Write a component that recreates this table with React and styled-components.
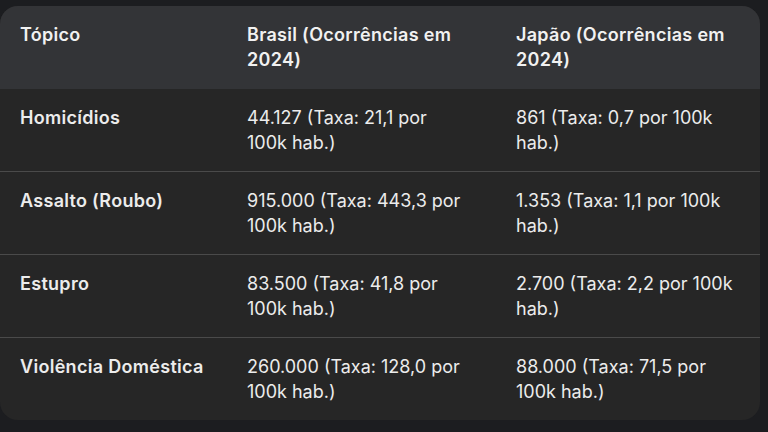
import React from "react";
import styled, { createGlobalStyle } from "styled-components";

const Global = createGlobalStyle`
  html, body { margin: 0; padding: 0; background: #1c1d20; }
  body { width: 768px; height: 432px; overflow: hidden; }
`;

const Page = styled.div`
  padding: 6px 8px 12px 0;
  font-family: Inter, "Noto Sans", sans-serif;
  color: #ececec;
`;

const Card = styled.div`
  width: 760px;
  border-radius: 18px;
  overflow: hidden;
  background: #262626;
`;

const Table = styled.table`
  width: 100%;
  border-collapse: collapse;
  table-layout: fixed;
`;

const Col = styled.col`
  width: ${(p) => p.$w}px;
`;

const HeadRow = styled.tr`
  background: #333437;
`;

const BodyRow = styled.tr`
  border-top: ${(p) => (p.$first ? "none" : "1px solid #4a4a4a")};
`;

const Th = styled.th`
  text-align: left;
  vertical-align: top;
  padding: 16px ${(p) => p.$pr || 20}px 17px 20px;
  font-size: 18px;
  line-height: 25px;
  font-weight: 600;
  letter-spacing: 0.3px;
  color: #f1f1f1;
  height: 50px;
`;

const Td = styled.td`
  text-align: left;
  vertical-align: top;
  padding: 16px ${(p) => p.$pr || 20}px 16px 20px;
  font-size: 18px;
  line-height: 25px;
  font-weight: ${(p) => (p.$bold ? 600 : 400)};
  letter-spacing: ${(p) => (p.$bold ? "0.3px" : "0px")};
  color: #ececec;
  height: 50px;
`;

const rows = [
  ["Homicídios", "44.127 (Taxa: 21,1 por 100k hab.)", "861 (Taxa: 0,7 por 100k hab.)"],
  ["Assalto (Roubo)", "915.000 (Taxa: 443,3 por 100k hab.)", "1.353 (Taxa: 1,1 por 100k hab.)"],
  ["Estupro", "83.500 (Taxa: 41,8 por 100k hab.)", "2.700 (Taxa: 2,2 por 100k hab.)"],
  ["Violência Doméstica", "260.000 (Taxa: 128,0 por 100k hab.)", "88.000 (Taxa: 71,5 por 100k hab.)"],
];

export default function App() {
  return (
    <>
      <Global />
      <Page>
        <Card>
          <Table>
            <colgroup>
              <Col $w={227} />
              <Col $w={269} />
              <Col $w={264} />
            </colgroup>
            <thead>
              <HeadRow>
                <Th>Tópico</Th>
                <Th $pr={31}>Brasil (Ocorrências em 2024)</Th>
                <Th>Japão (Ocorrências em 2024)</Th>
              </HeadRow>
            </thead>
            <tbody>
              {rows.map((r, i) => (
                <BodyRow key={r[0]} $first={i === 0}>
                  <Td $bold>{r[0]}</Td>
                  <Td $pr={31}>{r[1]}</Td>
                  <Td>{r[2]}</Td>
                </BodyRow>
              ))}
            </tbody>
          </Table>
        </Card>
      </Page>
    </>
  );
}
